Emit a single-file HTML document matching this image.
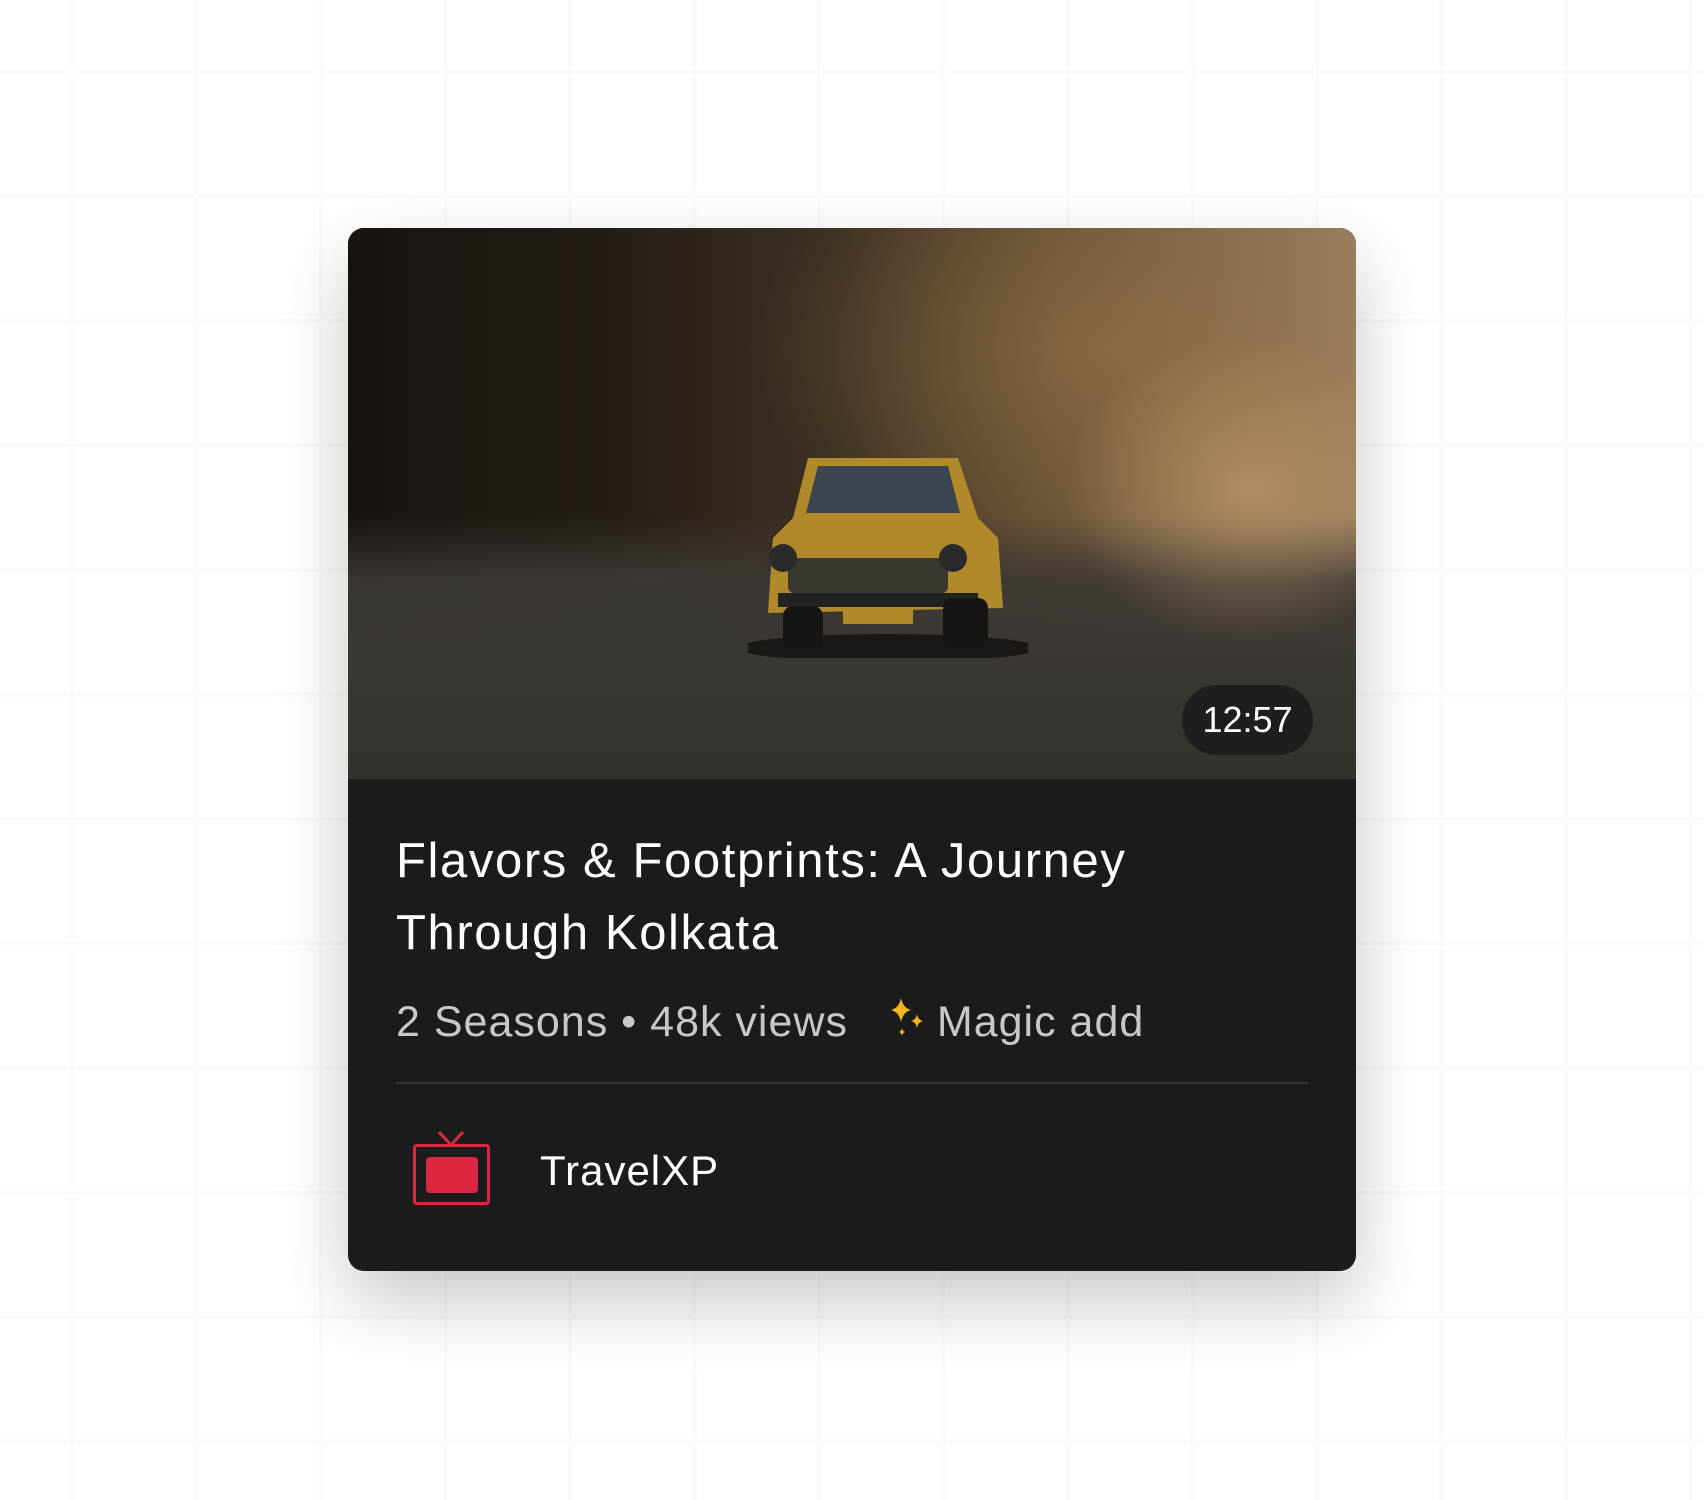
<!DOCTYPE html>
<html><head><meta charset="utf-8"><style>
html,body{margin:0;padding:0}
body{width:1704px;height:1500px;position:relative;overflow:hidden;background-color:#fff;
background-image:linear-gradient(#fafafa 0 4px,transparent 4px),linear-gradient(90deg,#fafafa 0 4px,transparent 4px);
background-size:124.5px 124.5px;background-position:70px 70px;font-family:"Liberation Sans",sans-serif}
.card{position:absolute;left:348px;top:228px;width:1008px;height:1043px;border-radius:16px;overflow:hidden;background:#1b1b1b;box-shadow:0 30px 70px rgba(0,0,0,.22)}
.img{position:absolute;left:0;top:0;width:1008px;height:551px;overflow:hidden;
background:
radial-gradient(ellipse 260px 220px at 900px 260px,rgba(200,160,110,.6),transparent 70%),
radial-gradient(ellipse 500px 300px at 750px 120px,rgba(150,115,70,.55),transparent 70%),
linear-gradient(180deg,transparent 0 52%,rgba(60,56,52,.9) 64%,#3a3632 80%,#34302c 100%),
linear-gradient(90deg,#17130f 0%,#231d16 25%,#3e3122 50%,#6a5236 70%,#9a7e5e 100%)}
.car{position:absolute;left:400px;top:200px;width:280px;height:230px}
.badge{position:absolute;left:834px;top:457px;width:131px;height:70px;border-radius:35px;background:#1e1e1e;color:#fff;font-size:36px;line-height:70px;text-align:center}
.title{position:absolute;left:48px;top:597px;width:820px;color:#fff;font-size:49px;letter-spacing:1.6px;line-height:72px;font-weight:500}
.meta{position:absolute;left:48px;top:768px;color:#c8c8c8;font-size:43px;letter-spacing:1px;line-height:50px;white-space:nowrap}
.hr{position:absolute;left:48px;top:854px;width:912px;height:2px;background:#353535}
.tv{position:absolute;left:64px;top:902px}
.name{position:absolute;left:192px;top:918px;color:#fff;font-size:42px;letter-spacing:1px;line-height:50px}
</style></head><body>
<div class="card">
 <div class="img">
  <svg class="car" viewBox="0 0 280 230">
   <ellipse cx="140" cy="220" rx="150" ry="14" fill="#1a1714"/>
   <path d="M60 30 L210 30 L230 90 L250 110 L255 180 L20 185 L25 110 L45 90 Z" fill="#b08a2a"/>
   <path d="M70 38 L200 38 L212 85 L58 85 Z" fill="#3a4550"/>
   <rect x="40" y="130" width="160" height="35" rx="6" fill="#3a3630"/>
   <rect x="30" y="165" width="200" height="14" fill="#222"/>
   <rect x="35" y="178" width="40" height="45" rx="10" fill="#151515"/>
   <rect x="195" y="170" width="45" height="50" rx="10" fill="#151515"/>
   <circle cx="35" cy="130" r="14" fill="#2a2a2a"/><circle cx="205" cy="130" r="14" fill="#2a2a2a"/>
   <rect x="95" y="180" width="70" height="16" fill="#b08a2a"/>
  </svg>
  <div class="badge">12:57</div>
 </div>
 <div class="title">Flavors &amp; Footprints: A Journey Through Kolkata</div>
 <div class="meta">2 Seasons • 48k views
  <svg width="38" height="44" viewBox="0 0 38 44" style="margin:0 10px 0 28px;vertical-align:-4px"><path d="M12 2 Q14 12 22 14 Q14 16 12 26 Q10 16 2 14 Q10 12 12 2Z" fill="#f2b51b"/><path d="M28 18 Q29 24 34 25 Q29 26 28 32 Q27 26 22 25 Q27 24 28 18Z" fill="#f2b51b"/><path d="M13 32 Q13.5 35 16 36 Q13.5 37 13 40 Q12.5 37 10 36 Q12.5 35 13 32Z" fill="#f2b51b"/></svg>Magic add</div>
 <div class="hr"></div>
 <svg class="tv" width="80" height="76" viewBox="0 0 80 76"><path d="M27 2 L39 15 L51 2" stroke="#dc2640" stroke-width="3" fill="none"/><rect x="2.5" y="15.5" width="74" height="58" rx="2" stroke="#dc2640" stroke-width="3" fill="none"/><rect x="14" y="27" width="52" height="36" rx="4" fill="#dc2640"/></svg>
 <div class="name">TravelXP</div>
</div>
</body></html>
